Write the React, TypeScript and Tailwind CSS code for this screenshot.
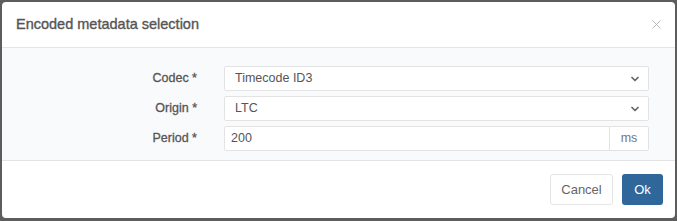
import { ChevronDown, X } from 'lucide-react';

const rows = [
  { label: 'Codec *', value: 'Timecode ID3' },
  { label: 'Origin *', value: 'LTC' },
];

function SelectBox({ value }: { value: string }) {
  return (
    <div className="flex h-[25px] flex-1 items-center justify-between rounded-[2px] border border-[#e3e3e3] bg-white pl-[10px] pr-[7px] text-[12.5px] text-[#555]">
      <span>{value}</span>
      <ChevronDown size={12} strokeWidth={3.5} className="text-[#666]" />
    </div>
  );
}

export default function App() {
  return (
    <div className="h-[221px] w-[677px] bg-[#5d5d5d] pl-[2px] pr-[2px] pt-[2px] pb-[3px] font-['Liberation_Sans',Arial,sans-serif]">
      <div className="flex h-full flex-col overflow-hidden rounded-[4px] bg-white">
        <div className="flex h-[46px] shrink-0 items-center justify-between border-b border-[#e5e5e5] pl-[14px] pr-[11px]">
          <h4 className="text-[14.5px] text-[#555] [-webkit-text-stroke:0.35px_#555]">Encoded metadata selection</h4>
          <X size={15} strokeWidth={1.5} className="text-[#b5b5b5]" />
        </div>
        <div className="flex h-[113px] shrink-0 flex-col gap-[5px] border-b border-[#e3e3e3] bg-[#f9fafb] pt-[18px] pl-[148px] pr-[26px]">
          {rows.map((r) => (
            <div key={r.label} className="flex items-center">
              <label className="w-[74px] pr-[27px] text-right text-[12.5px] text-[#555] whitespace-nowrap [-webkit-text-stroke:0.3px_#555]">
                {r.label}
              </label>
              <SelectBox value={r.value} />
            </div>
          ))}
          <div className="flex items-center">
            <label className="w-[74px] pr-[27px] text-right text-[12.5px] text-[#555] whitespace-nowrap [-webkit-text-stroke:0.3px_#555]">
              Period *
            </label>
            <div className="flex h-[25px] flex-1 rounded-[2px] border border-[#e3e3e3] bg-white text-[12.5px] text-[#555]">
              <div className="flex flex-1 items-center pl-[6px]">200</div>
              <div className="flex w-[39px] items-center justify-center border-l border-[#e3e3e3] text-[#777]">ms</div>
            </div>
          </div>
        </div>
        <div className="flex flex-1 items-center justify-end gap-[9px] pr-[12px]">
          <button className="h-[31px] w-[63px] rounded-[3px] border border-[#e5e5e5] bg-white text-[13px] text-[#666]">
            Cancel
          </button>
          <button className="h-[31px] w-[41px] rounded-[3px] bg-[#30679b] text-[13px] text-white">
            Ok
          </button>
        </div>
      </div>
    </div>
  );
}
